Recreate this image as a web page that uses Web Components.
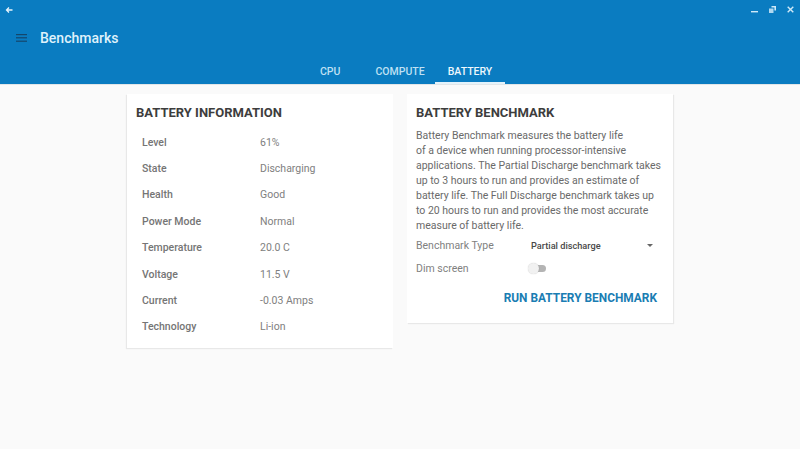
<!DOCTYPE html>
<html>
<head>
<meta charset="utf-8">
<title>Benchmarks</title>
<style>
  html, body { margin: 0; height: 100%; }
  body { background: #fafafa; font-family: Roboto, "Liberation Sans", sans-serif; overflow: hidden; }
</style>
</head>
<body>
<app-shell>
  <app-bar></app-bar>
  <main-cards>
    <info-card slot="left" heading="BATTERY INFORMATION">
      <info-row label="Level" value="61%"></info-row>
      <info-row label="State" value="Discharging"></info-row>
      <info-row label="Health" value="Good"></info-row>
      <info-row label="Power Mode" value="Normal"></info-row>
      <info-row label="Temperature" value="20.0 C"></info-row>
      <info-row label="Voltage" value="11.5 V"></info-row>
      <info-row label="Current" value="-0.03 Amps"></info-row>
      <info-row label="Technology" value="Li-ion"></info-row>
    </info-card>
    <benchmark-card slot="right"></benchmark-card>
  </main-cards>
</app-shell>

<script>
class AppShell extends HTMLElement {
  constructor() {
    super();
    this.attachShadow({ mode: 'open' });
    this.shadowRoot.innerHTML = `
      <style>
        :host { display: flex; flex-direction: column; height: 449px; }
      </style>
      <slot></slot>
    `;
  }
}

class AppBar extends HTMLElement {
  constructor() {
    super();
    this.attachShadow({ mode: 'open' });
    this.shadowRoot.innerHTML = `
      <style>
        :host {
          display: block;
          height: 84px;
          background: #0a7cc1;
          border-bottom: 1px solid #e2e6e8;
          color: #fff;
        }
        .window {
          height: 19px;
          display: flex;
          align-items: center;
          justify-content: space-between;
          padding: 0 6px 0 5px;
        }
        .window svg { display: block; }
        .controls { display: flex; gap: 11px; }
        .toolbar {
          height: 38px;
          display: flex;
          align-items: center;
          padding-left: 16px;
          gap: 13px;
        }
        .title { font-size: 14px; font-weight: 500; color: #dff1fb; }
        .tabs {
          height: 27px;
          display: flex;
          justify-content: center;
        }
        .tab {
          font-size: 10.5px;
          font-weight: 500;
          color: #bfe0f3;
          height: 27px;
          box-sizing: border-box;
          padding-top: 8px;
          text-align: center;
        }
        .tab.cpu { width: 76px; padding-left: 25px; text-align: left; }
        .tab.compute { width: 64px; padding-right: 6px; }
        .tab.active {
          width: 70px;
          color: #eef8fd;
          border-bottom: 2px solid #e4f3fb;
        }
      </style>
      <div class="window">
        <svg width="8" height="8" viewBox="0 0 8 8" fill="none" stroke="#e6f4fc" stroke-width="1.3">
          <path d="M7.5 4H1.5M4 1.5L1.5 4 4 6.5"/>
        </svg>
        <div class="controls">
          <svg width="7" height="8" viewBox="0 0 7 8" fill="#cfe9f8"><rect x="0" y="5" width="7" height="1.4"/></svg>
          <svg width="7" height="7" viewBox="0 0 7 7" fill="#cfe9f8"><path d="M2.5 0H7v4.5H5.4V1.6H2.5z"/><path d="M0 2.5h4.5V7H0z" opacity="0.85"/></svg>
          <svg width="7" height="7" viewBox="0 0 7 7" stroke="#cfe9f8" stroke-width="1.4"><path d="M.7.7l5.6 5.6M6.3.7L.7 6.3"/></svg>
        </div>
      </div>
      <div class="toolbar">
        <svg width="11" height="8" viewBox="0 0 11 8" fill="#14466b">
          <rect width="11" height="1.2"/><rect y="3.2" width="11" height="1.2"/><rect y="6.6" width="11" height="1.2"/>
        </svg>
        <span class="title">Benchmarks</span>
      </div>
      <div class="tabs">
        <span class="tab cpu">CPU</span>
        <span class="tab compute">COMPUTE</span>
        <span class="tab active">BATTERY</span>
      </div>
    `;
  }
}

class MainCards extends HTMLElement {
  constructor() {
    super();
    this.attachShadow({ mode: 'open' });
    this.shadowRoot.innerHTML = `
      <style>
        :host {
          display: flex;
          justify-content: center;
          align-items: flex-start;
          gap: 14px;
          padding: 9px 0 0 0;
        }
      </style>
      <slot name="left"></slot>
      <slot name="right"></slot>
    `;
  }
}

class InfoCard extends HTMLElement {
  constructor() {
    super();
    this.attachShadow({ mode: 'open' });
    this.shadowRoot.innerHTML = `
      <style>
        :host {
          display: block;
          width: 266px;
          height: 254px;
          box-sizing: border-box;
          background: #fff;
          box-shadow: -1px 1px 1px rgba(0,0,0,0.07);
          padding: 11px 9px 0 9px;
        }
        h2 {
          margin: 0 0 8px 0;
          font-size: 13px;
          line-height: 16px;
          font-weight: 700;
          color: #3d3d3d;
        }
      </style>
      <h2></h2>
      <slot></slot>
    `;
    this.shadowRoot.querySelector('h2').textContent = this.getAttribute('heading');
  }
}

class InfoRow extends HTMLElement {
  constructor() {
    super();
    this.attachShadow({ mode: 'open' });
    this.shadowRoot.innerHTML = `
      <style>
        :host {
          display: grid;
          grid-template-columns: 118px 1fr;
          height: 26.4px;
          align-items: center;
          padding-left: 6px;
          font-size: 10.5px;
          color: #808080;
        }
        .label { font-weight: 500; color: #757575; }
      </style>
      <span class="label"></span><span class="value"></span>
    `;
    this.shadowRoot.querySelector('.label').textContent = this.getAttribute('label');
    this.shadowRoot.querySelector('.value').textContent = this.getAttribute('value');
  }
}

class ToggleSwitch extends HTMLElement {
  constructor() {
    super();
    this.attachShadow({ mode: 'open' });
    this.shadowRoot.innerHTML = `
      <style>
        :host {
          display: block;
          position: relative;
          width: 19px;
          height: 11px;
          margin-left: -3px;
        }
        .track {
          position: absolute;
          left: 2px;
          top: 2px;
          width: 16px;
          height: 7px;
          border-radius: 4px;
          background: #b4b4b4;
        }
        .thumb {
          position: absolute;
          left: 0;
          top: 0;
          width: 11px;
          height: 11px;
          border-radius: 50%;
          background: #f1f1f1;
          box-shadow: 0 0 1px rgba(0,0,0,0.25);
        }
      </style>
      <div class="track"></div>
      <div class="thumb"></div>
    `;
  }
}

class BenchmarkCard extends HTMLElement {
  constructor() {
    super();
    this.attachShadow({ mode: 'open' });
    this.shadowRoot.innerHTML = `
      <style>
        :host {
          display: block;
          width: 266px;
          height: 229px;
          box-sizing: border-box;
          background: #fff;
          box-shadow: 1px 1px 1px rgba(0,0,0,0.07);
          padding: 11px 9px 0 9px;
        }
        h2 {
          margin: 0 0 7px 0;
          font-size: 13px;
          line-height: 16px;
          font-weight: 700;
          color: #3d3d3d;
        }
        p {
          margin: 0;
          font-size: 10.5px;
          line-height: 15px;
          color: #6a6a6a;
        }
        .row {
          display: grid;
          grid-template-columns: 115px 1fr;
          align-items: center;
          font-size: 10.5px;
          color: #7f7f7f;
        }
        .type { margin-top: 1px; height: 23px; }
        .dim { height: 23px; }
        .select {
          display: flex;
          justify-content: space-between;
          align-items: center;
          font-size: 9.2px;
          font-weight: 500;
          color: #484848;
          padding-right: 11px;
        }
        .caret {
          width: 0;
          height: 0;
          border: 3px solid transparent;
          border-top: 3px solid #666;
          border-bottom: 0;
        }
        .action {
          margin-top: 11px;
          padding-right: 7px;
          text-align: right;
          font-size: 11.9px;
          font-weight: 700;
          color: #1a7db3;
        }
      </style>
      <h2>BATTERY BENCHMARK</h2>
      <p>Battery Benchmark measures the battery life<br>of a device when running processor-intensive<br>applications. The Partial Discharge benchmark takes<br>up to 3 hours to run and provides an estimate of<br>battery life. The Full Discharge benchmark takes up<br>to 20 hours to run and provides the most accurate<br>measure of battery life.</p>
      <div class="row type">
        <span>Benchmark Type</span>
        <div class="select"><span>Partial discharge</span><span class="caret"></span></div>
      </div>
      <div class="row dim">
        <span>Dim screen</span>
        <toggle-switch></toggle-switch>
      </div>
      <div class="action">RUN BATTERY BENCHMARK</div>
    `;
  }
}

customElements.define('app-shell', AppShell);
customElements.define('app-bar', AppBar);
customElements.define('main-cards', MainCards);
customElements.define('info-card', InfoCard);
customElements.define('info-row', InfoRow);
customElements.define('toggle-switch', ToggleSwitch);
customElements.define('benchmark-card', BenchmarkCard);
</script>
</body>
</html>
